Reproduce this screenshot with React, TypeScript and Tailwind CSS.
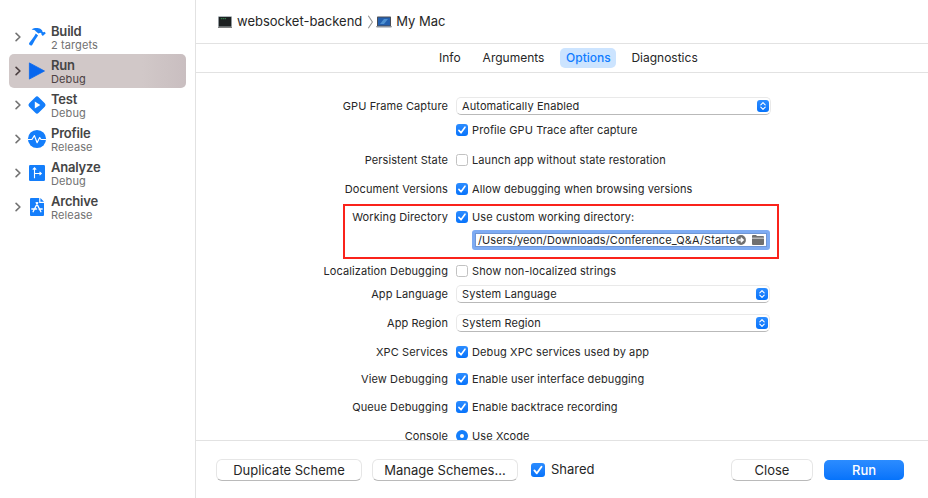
import type { ReactNode } from "react";

function Chevron({ dark }: { dark?: boolean }) {
  return (
    <svg className="ml-[15px] h-2.5 w-1.5 shrink-0" viewBox="0 0 6 10" fill="none">
      <path d="M1.1 1.4 L4.9 5 L1.1 8.6" stroke={dark ? "#4b3f40" : "#737373"} strokeWidth="1.6" strokeLinecap="round" strokeLinejoin="round" />
    </svg>
  );
}

function HammerIcon() {
  return (
    <svg className="size-5" viewBox="0 0 20 20" fill="#147efb">
      <path d="M4.6 2.6 C6.8 .9 9.3 .8 11.6 1.2 C13.2 1.5 14.3 2.2 15.2 3.5 L15.6 4.9 L16.7 5.2 L17.5 4.8 L18.8 6.3 L15.8 9 L14.4 7.6 L14.5 6.4 L13.3 5.7 L11.4 6.5 L8.7 4.2 C7.7 2.9 6.3 2.8 4.6 2.6 Z" />
      <path d="M8.8 6.6 L11.1 8.5 C8.5 11.8 7 14.8 5.2 18 C4.2 19.5 1.2 17.6 2.2 16.1 C4.6 13.2 6.7 10.3 8.8 6.6 Z" />
    </svg>
  );
}

function RunIcon() {
  return (
    <svg className="size-5" viewBox="0 0 20 20">
      <path d="M2.4 1.9 L17.5 10 L2.4 18.1 Z" fill="#0867ee" stroke="#0867ee" strokeWidth=".8" strokeLinejoin="round" />
    </svg>
  );
}

function TestIcon() {
  return (
    <svg className="size-5" viewBox="0 0 20 20">
      <rect x="3.3" y="3.3" width="13.4" height="13.4" rx="2.4" transform="rotate(45 10 10)" fill="#147efb" />
      <path d="M7.8 6.6 L13.3 10 L7.8 13.4 Z" fill="#fff" />
    </svg>
  );
}

function ProfileIcon() {
  return (
    <svg className="size-5" viewBox="0 0 20 20">
      <circle cx="10" cy="10" r="9.1" fill="#147efb" />
      <path d="M1 10.5 H4.9 L7.4 6.6 L10.1 13.7 L12.7 8.6 L14 10.5 H19" fill="none" stroke="#fff" strokeWidth="1.2" strokeLinejoin="round" />
    </svg>
  );
}

function AnalyzeIcon() {
  return (
    <svg className="size-5" viewBox="0 0 20 20">
      <rect x="2" y="2" width="16" height="16" rx="1.2" fill="#147efb" />
      <path d="M7.5 15.3 V5.2 M5.8 6.7 L7.5 4.9 L9.2 6.7 M7.5 10.5 H14 M12.5 8.8 L14.3 10.5 L12.5 12.2" fill="none" stroke="#fff" strokeWidth="1.1" />
    </svg>
  );
}

function ArchiveIcon() {
  return (
    <svg className="size-5" viewBox="0 0 20 20">
      <path d="M4 1 H12.2 V6 H17 V18 Q17 19 16 19 H4 Q3 19 3 18 V2 Q3 1 4 1 Z" fill="#147efb" />
      <path d="M13.4 1 L17 4.7 H13.4 Z" fill="#147efb" />
      <path d="M9.2 5.6 L13.9 14.7 M10.7 5.6 L6.1 14.7 M4.8 12 H9.6 M12 12 H15.2" fill="none" stroke="#fff" strokeWidth="1.3" strokeLinecap="round" />
    </svg>
  );
}

function SideItem({ icon, title, sub, active }: { icon: ReactNode; title: string; sub: string; active?: boolean }) {
  return (
    <div className={`mx-[9px] flex h-[34px] items-center rounded-[5px] ${active ? "bg-linear-to-r from-[#d1c8c8] from-75% to-[#c9bec0]" : ""}`}>
      <div className="-ml-[9px] flex items-center">
        <Chevron dark={active} />
        <span className="ml-1.5">{icon}</span>
      </div>
      <div className="ml-1 flex flex-col">
        <span className="text-[13px] leading-4 font-semibold tracking-[-0.2px] text-[#454545]">{title}</span>
        <span className={`text-[11px] leading-[13px] tracking-[0.1px] ${active ? "text-[#4c4143]" : "text-[#717171]"}`}>{sub}</span>
      </div>
    </div>
  );
}

function Check({ on, big }: { on?: boolean; big?: boolean }) {
  if (!on) return <span className="size-3 shrink-0 rounded-[2.5px] border border-[#c2c2c2] bg-white" />;
  return (
    <svg className={`shrink-0 rounded-[3px] bg-linear-to-b from-[#2b8cff] to-[#0573fb] ${big ? "size-3.5" : "size-3"}`} viewBox="0 0 12 12" fill="none">
      <path d="M2.9 6.4 L5 8.8 L9 3.2" stroke="#fff" strokeWidth="1.6" strokeLinecap="round" strokeLinejoin="round" />
    </svg>
  );
}

function Row({ label, className, inset, children }: { label?: string; className: string; inset?: boolean; children: ReactNode }) {
  return (
    <div className={`flex h-5 items-center ${className}`}>
      <span className={`shrink-0 text-right ${inset ? "w-[103px]" : "w-[252px]"}`}>{label}</span>
      <div className="ml-2 flex items-center">{children}</div>
    </div>
  );
}

function Option({ on, text }: { on?: boolean; text: string }) {
  return (
    <>
      <Check on={on} />
      <span className="ml-1">{text}</span>
    </>
  );
}

function Select({ text, className }: { text: string; className: string }) {
  return (
    <div className={`flex h-[18px] items-center justify-between rounded-[5px] border border-[#e9e9e9] border-b-[#b9b9b9] bg-white pr-[1px] pl-[5px] ${className}`}>
      <span>{text}</span>
      <svg className="size-3 rounded-[3px] bg-linear-to-b from-[#2b8cff] to-[#0573fb]" viewBox="0 0 12 12" fill="none">
        <path d="M3.8 4.8 L6 2.7 L8.2 4.8 M3.8 7.2 L6 9.3 L8.2 7.2" stroke="#fff" strokeWidth="1.1" strokeLinecap="round" strokeLinejoin="round" />
      </svg>
    </div>
  );
}

function PushButton({ children, className }: { children: ReactNode; className: string }) {
  return (
    <button className={`h-[22px] rounded-[6px] border border-[#e6e6e6] border-b-[#bababa] bg-white leading-5 ${className}`}>{children}</button>
  );
}

export default function App() {
  return (
    <div className="flex h-[498px] w-[928px] overflow-hidden bg-white font-[Inter,'Liberation_Sans',sans-serif] whitespace-nowrap text-[#262626]">
      <aside className="w-[196px] shrink-0 border-r border-[#e2e2e2] pt-5">
        <SideItem icon={<HammerIcon />} title="Build" sub="2 targets" />
        <SideItem icon={<RunIcon />} title="Run" sub="Debug" active />
        <SideItem icon={<TestIcon />} title="Test" sub="Debug" />
        <SideItem icon={<ProfileIcon />} title="Profile" sub="Release" />
        <SideItem icon={<AnalyzeIcon />} title="Analyze" sub="Debug" />
        <SideItem icon={<ArchiveIcon />} title="Archive" sub="Release" />
      </aside>
      <main className="flex w-[732px] flex-col">
        <header className="flex h-11 shrink-0 items-center border-b border-[#e2e2e2] pl-[22px] text-[13px]">
          <svg className="h-3 w-3.5" viewBox="0 0 14 12">
            <rect width="14" height="12" rx=".6" fill="#c5cdd1" />
            <rect x=".7" y=".9" width="12.6" height="9.7" fill="#1c2021" />
            <path d="M2.8 2.7 H8" stroke="#3c9b57" strokeWidth=".9" strokeDasharray="1.4 .5" />
            <path d="M0 11.4 H14" stroke="#777" strokeWidth="1" />
          </svg>
          <span className="ml-[5px]">websocket-backend</span>
          <svg className="ml-[5px] h-3.5 w-[7px]" viewBox="0 0 7 14" fill="none">
            <path d="M1.3 .8 L5.4 7 L1.3 13.2" stroke="#929292" strokeWidth="1.1" />
          </svg>
          <svg className="ml-[2px] h-3 w-4" viewBox="0 0 16 12">
            <rect x="1" y=".5" width="14" height="10" rx=".7" fill="#4a4d55" />
            <rect x="2" y="1.5" width="12" height="8" fill="#235fae" />
            <path d="M4 8 L8 3 L12 3 L8 8 Z" fill="#4e91d1" />
            <path d="M0 10 H16 L15.3 11.6 H.7 Z" fill="#8e939b" />
          </svg>
          <span className="ml-1">My Mac</span>
        </header>
        <nav className="flex h-[29px] shrink-0 items-center border-b border-[#e2e2e2] pl-[243px] text-[12px]">
          <span>Info</span>
          <span className="ml-[22px]">Arguments</span>
          <span className="ml-4 flex h-5 w-14 items-center justify-center rounded-[5px] bg-[#cce4ff] font-medium text-[#107cff]">Options</span>
          <span className="ml-[15px]">Diagnostics</span>
        </nav>
        <section className="h-[367px] shrink-0 overflow-hidden text-[11px] tracking-[0.1px]">
          <Row label="GPU Frame Capture" className="mt-[23px]"><Select text="Automatically Enabled" className="w-[315px]" /></Row>
          <Row className="mt-1"><Option on text="Profile GPU Trace after capture" /></Row>
          <Row label="Persistent State" className="mt-2.5"><Option text="Launch app without state restoration" /></Row>
          <Row label="Document Versions" className="mt-[9px]"><Option on text="Allow debugging when browsing versions" /></Row>
          <div className="mt-[5px] ml-[147px] h-[55px] w-[436px] border-2 border-[#fa231b] pt-px">
            <Row label="Working Directory" inset className=""><Option on text="Use custom working directory:" /></Row>
            <div className="mt-[3px] ml-[127px] flex h-5 w-[298px] items-center rounded-[3px] border-[3px] border-[#7eabf2] bg-white pl-[3px] shadow-[inset_0_0_0_1px_#6f96d6]">
              <span>/Users/yeon/Downloads/Conference_Q&amp;A/Starte</span>
              <svg className="ml-auto size-2.5 shrink-0" viewBox="0 0 10 10" fill="none">
                <circle cx="5" cy="5" r="4.9" fill="#707070" />
                <path d="M2.3 5 H6.5 M4.8 2.7 L7.2 5 L4.8 7.3" stroke="#fff" strokeWidth="1.4" />
              </svg>
              <svg className="mr-[3px] ml-1.5 h-2.5 w-3 shrink-0" viewBox="0 0 12 10" fill="#707070">
                <path d="M0 2.8 V1 Q0 0 1 0 H4 L5 1 H11 Q12 1 12 2 V2.8 Z M0 3.6 H12 V9 Q12 10 11 10 H1 Q0 10 0 9 Z" />
              </svg>
            </div>
          </div>
          <Row label="Localization Debugging" className="mt-[2px]"><Option text="Show non-localized strings" /></Row>
          <Row label="App Language" className="mt-[3px]"><Select text="System Language" className="w-[314px]" /></Row>
          <Row label="App Region" className="mt-[9px]"><Select text="System Region" className="w-[314px]" /></Row>
          <Row label="XPC Services" className="mt-[9px]"><Option on text="Debug XPC services used by app" /></Row>
          <Row label="View Debugging" className="mt-[7px]"><Option on text="Enable user interface debugging" /></Row>
          <Row label="Queue Debugging" className="mt-2"><Option on text="Enable backtrace recording" /></Row>
          <Row label="Console" className="mt-[9px]">
            <span className="flex size-3 items-center justify-center rounded-full bg-[#147efb]"><span className="size-1 rounded-full bg-white" /></span>
            <span className="ml-1">Use Xcode</span>
          </Row>
        </section>
        <footer className="flex h-[58px] shrink-0 items-center border-t border-[#e2e2e2] pl-5 text-[13px]">
          <PushButton className="w-[146px]">Duplicate Scheme</PushButton>
          <PushButton className="ml-2.5 w-[146px]">Manage Schemes...</PushButton>
          <span className="ml-[13px] flex items-center"><Check on big /><span className="ml-1.5">Shared</span></span>
          <PushButton className="ml-auto w-[82px]">Close</PushButton>
          <button className="mr-6 ml-[11px] h-5 w-20 rounded-[5px] bg-linear-to-b from-[#2b8cff] to-[#0573fb] leading-5 font-medium text-white">Run</button>
        </footer>
      </main>
    </div>
  );
}
